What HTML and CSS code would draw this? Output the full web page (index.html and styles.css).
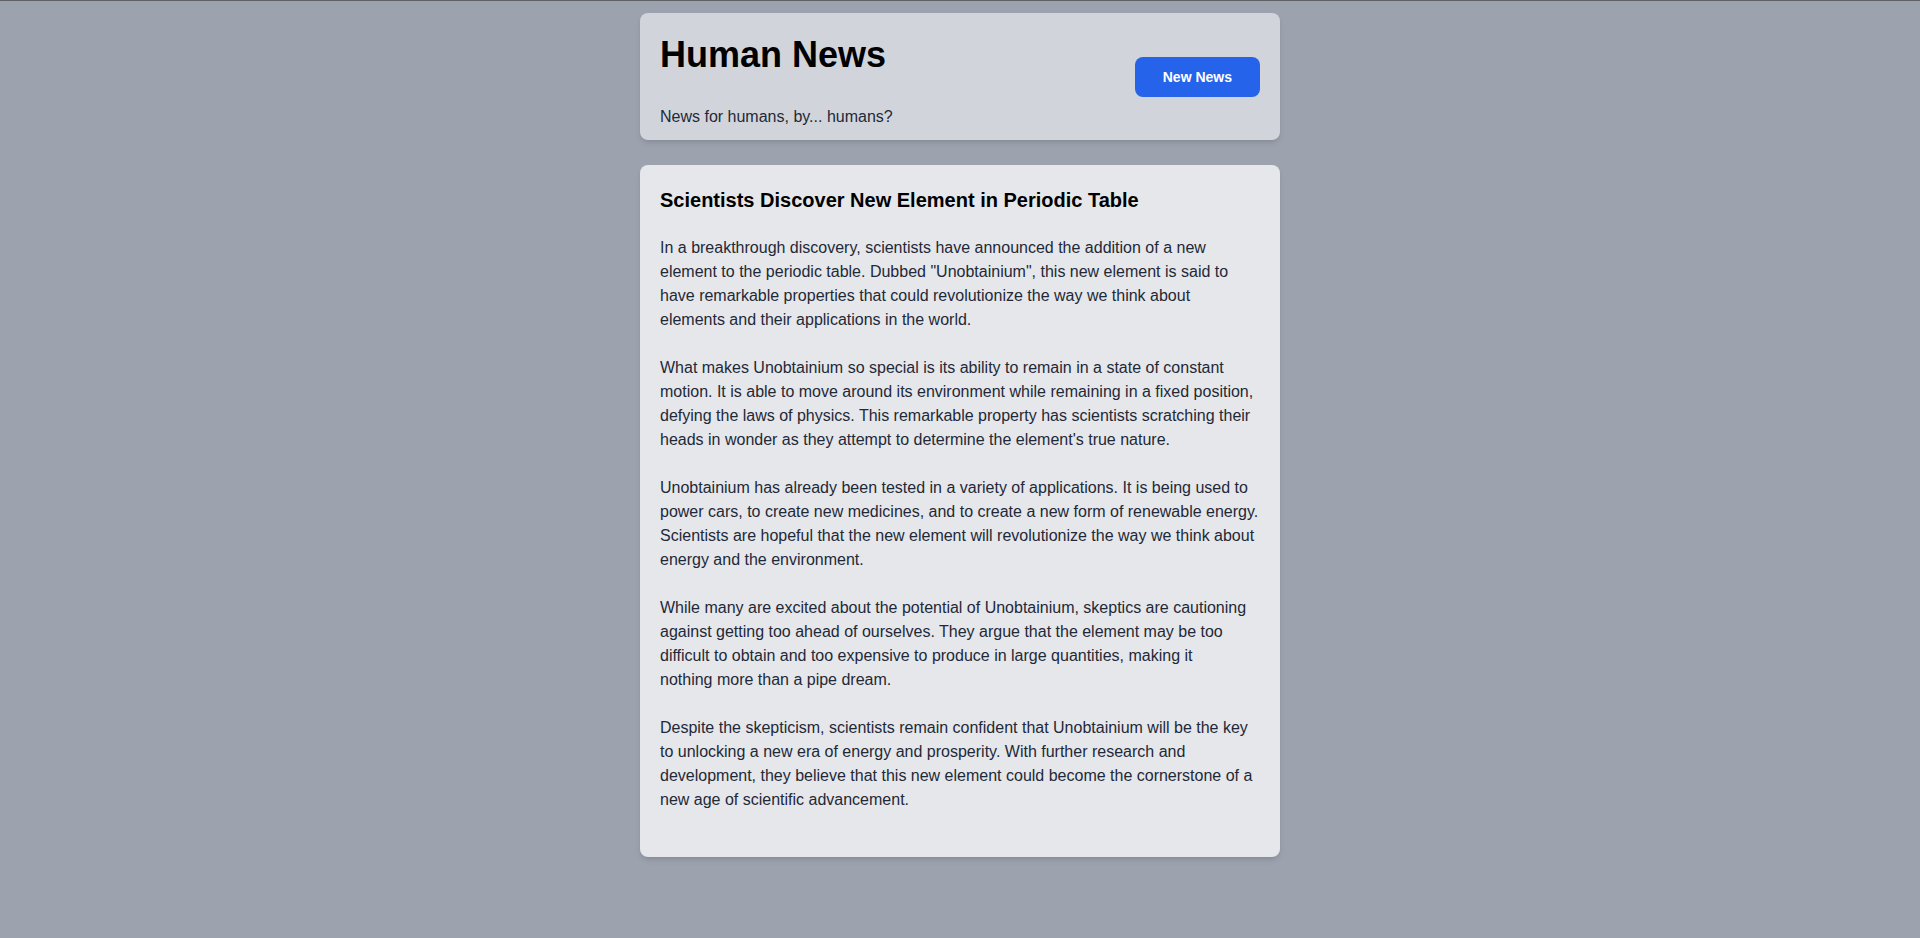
FILE: index.html
```html
<!DOCTYPE html>
<html lang="en">
<head>
<meta charset="utf-8">
<title>Human News</title>
<link rel="stylesheet" href="styles.css">
</head>
<body>
<main class="page">
  <header class="masthead">
    <div class="brand">
      <h1 class="brand-title">Human News</h1>
      <p class="brand-tagline">News for humans, by... humans?</p>
    </div>
    <button class="new-btn" type="button">New News</button>
  </header>
  <article class="story">
    <h2 class="story-title">Scientists Discover New Element in Periodic Table</h2>
    <p class="story-para">In a breakthrough discovery, scientists have announced the addition of a new element to the periodic table. Dubbed "Unobtainium", this new element is said to have remarkable properties that could revolutionize the way we think about elements&nbsp;and their applications in the world.</p>
    <p class="story-para">What makes Unobtainium so special is its ability to remain in a state of constant motion. It is able to move around its environment while remaining in a fixed position, defying the laws of physics. This remarkable property has scientists scratching their heads in wonder as they attempt to determine the element's true nature.</p>
    <p class="story-para">Unobtainium has already been tested in a variety of applications. It is being used to power cars, to create new medicines, and to create a new form of renewable energy. Scientists are hopeful that the new element will revolutionize the way we think about energy and the environment.</p>
    <p class="story-para">While many are excited about the potential of Unobtainium, skeptics are cautioning against getting too ahead of ourselves. They argue that the element may be too difficult to obtain and too expensive to produce in large quantities, making it nothing&nbsp;more than a pipe dream.</p>
    <p class="story-para">Despite the skepticism, scientists remain confident that Unobtainium will be the key to unlocking a new era of energy and prosperity. With further research and development, they believe that this new element could become the cornerstone of a new age of scientific advancement.</p>
  </article>
</main>
</body>
</html>
```

FILE: styles.css
```css
html, body {
  margin: 0;
  padding: 0;
}

body {
  min-height: 100vh;
  box-sizing: border-box;
  background: #9ca3af;
  border-top: 1px solid #5f6165;
  font-family: "Liberation Sans", Arial, sans-serif;
  color: #1f2937;
}

.page {
  width: 640px;
  margin: 0 auto;
  padding-top: 12px;
  display: flex;
  flex-direction: column;
  gap: 25px;
}

.masthead {
  display: flex;
  justify-content: space-between;
  align-items: center;
  background: #d1d5db;
  border-radius: 8px;
  padding: 22px 20px 11px;
  box-shadow: 0 4px 6px -1px rgba(0, 0, 0, 0.1), 0 2px 4px -2px rgba(0, 0, 0, 0.1);
}

.brand-title {
  margin: 0;
  font-size: 36px;
  line-height: 40px;
  font-weight: 700;
  color: #000;
}

.brand-tagline {
  margin: 30px 0 0;
  font-size: 16px;
  line-height: 24px;
  color: #1f2937;
}

.new-btn {
  margin-bottom: 10px;
  border: 0;
  border-radius: 8px;
  background: #2563eb;
  color: #fff;
  font-family: inherit;
  font-size: 14px;
  line-height: 20px;
  font-weight: 700;
  padding: 10px 28px;
  cursor: pointer;
}

.story {
  background: #e5e7eb;
  border-radius: 8px;
  padding: 21px 20px 45px;
  box-shadow: 0 4px 6px -1px rgba(0, 0, 0, 0.1), 0 2px 4px -2px rgba(0, 0, 0, 0.1);
}

.story-title {
  margin: 0 0 22px;
  font-size: 20px;
  line-height: 28px;
  font-weight: 700;
  color: #000;
}

.story-para {
  margin: 0 0 24px;
  font-size: 16px;
  line-height: 24px;
  color: #1f2937;
}

.story-para:last-child {
  margin-bottom: 0;
}
```
